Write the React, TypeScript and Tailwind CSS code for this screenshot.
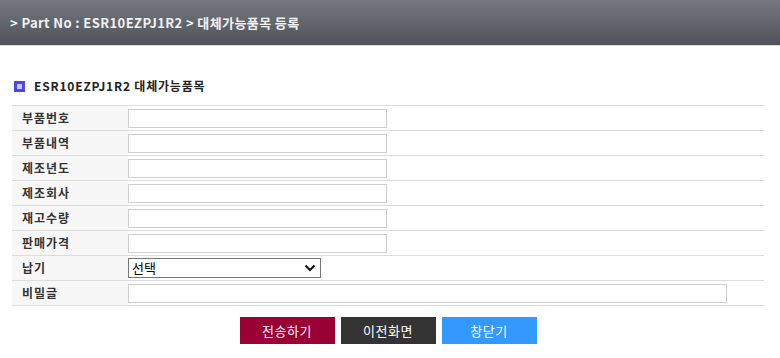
import React from "react";

const rows = ["부품번호", "부품내역", "제조년도", "제조회사", "재고수량", "판매가격"];

const App = () => {
    return (
        <div
            className="w-[780px] h-[358px] bg-white text-[12px] text-[#333]"
            style={{ fontFamily: '"Noto Sans CJK KR", "Noto Sans", sans-serif' }}
        >
            <div className="h-[46px] bg-gradient-to-b from-[#747880] to-[#505359] border-b border-[#d8dade] flex items-center pl-[10px]">
                <span className="text-[13px] font-bold text-[#f2f2f2] leading-none tracking-[0.4px]">
                    &gt; Part No : ESR10EZPJ1R2 &gt; 대체가능품목 등록
                </span>
            </div>

            <div className="px-[12px] pt-[33px] w-[776px]">
                <div className="flex items-center h-[14px] pl-[2px] mb-[12px]">
                    <span className="w-[11px] h-[11px] bg-[#4a4ae0] flex items-center justify-center mr-[9px]">
                        <span className="w-[5px] h-[5px] bg-[#c8c8ff]" />
                    </span>
                    <span className="font-bold text-[12px] text-[#222] tracking-[0.8px]">ESR10EZPJ1R2 대체가능품목</span>
                </div>

                <div className="border-t border-[#dcdcdc]">
                    {rows.map((label) => (
                        <div key={label} className="flex h-[25px] border-b border-[#dcdcdc]">
                            <div className="w-[116px] bg-[#f7f7f7] flex items-center pl-[10px] font-bold tracking-[1px]">
                                {label}
                            </div>
                            <div className="flex items-center">
                                <div className="w-[259px] h-[19px] border border-[#cfcfcf] bg-white" />
                            </div>
                        </div>
                    ))}
                    <div className="flex h-[25px] border-b border-[#dcdcdc]">
                        <div className="w-[116px] bg-[#f7f7f7] flex items-center pl-[10px] font-bold tracking-[1px]">납기</div>
                        <div className="flex items-center">
                            <div className="w-[193px] h-[20px] border border-[#767676] bg-white flex items-center justify-between pl-[3px] pr-[4px]">
                                <span className="text-[13px] text-black">선택</span>
                                <svg width="12" height="8" viewBox="0 0 12 8">
                                    <path d="M1.5 1.5 L6 6 L10.5 1.5" fill="none" stroke="#111" strokeWidth="2" />
                                </svg>
                            </div>
                        </div>
                    </div>
                    <div className="flex h-[25px] border-b border-[#dcdcdc]">
                        <div className="w-[116px] bg-[#f7f7f7] flex items-center pl-[10px] font-bold tracking-[1px]">비밀글</div>
                        <div className="flex items-center">
                            <div className="w-[599px] h-[19px] border border-[#cfcfcf] bg-white" />
                        </div>
                    </div>
                </div>

                <div className="flex justify-center gap-[6px] mt-[11px]">
                    <button className="w-[95px] h-[27px] bg-[#990033] text-white text-[13px] tracking-[0.5px]">전송하기</button>
                    <button className="w-[95px] h-[27px] bg-[#333333] text-white text-[13px] tracking-[0.5px]">이전화면</button>
                    <button className="w-[95px] h-[27px] bg-[#3399ff] text-white text-[13px] tracking-[0.5px]">창닫기</button>
                </div>
            </div>
        </div>
    );
};

export default App;
